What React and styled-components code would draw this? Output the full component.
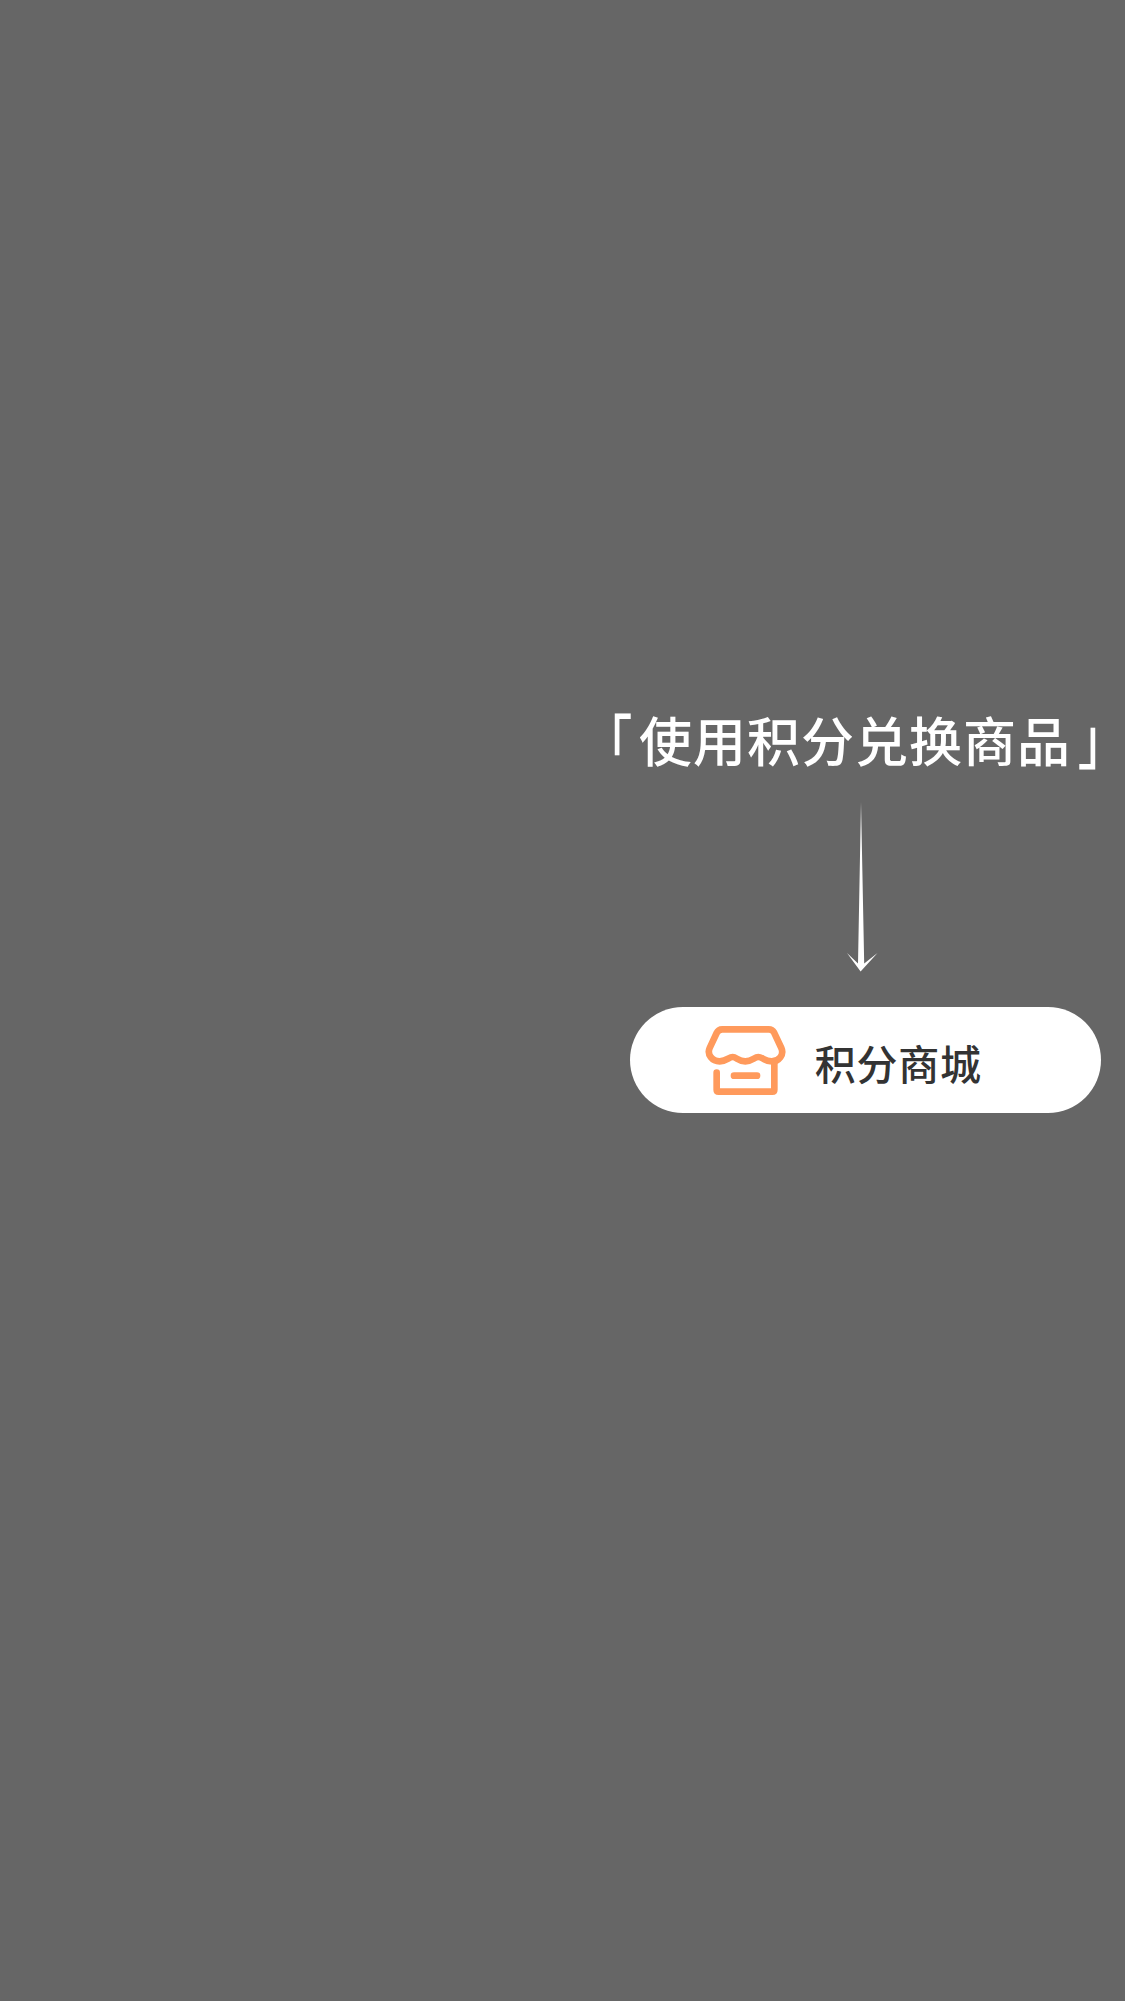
import React from "react";
import styled, { createGlobalStyle } from "styled-components";

const GlobalStyle = createGlobalStyle`
  body {
    margin: 0;
    background: #666666;
    font-family: "Noto Sans CJK SC", "Noto Sans", sans-serif;
  }
`;

const Overlay = styled.main`
  box-sizing: border-box;
  display: flex;
  flex-direction: column;
  align-items: flex-end;
  width: 1125px;
  height: 2001px;
  padding-top: 699px;
  overflow: hidden;
  background: #666666;
`;

const Hint = styled.p`
  display: flex;
  margin: 0;
  color: #ffffff;
  font-size: 53px;
  font-weight: 500;
  letter-spacing: 1px;
  line-height: 80px;
  white-space: nowrap;
`;

const Bracket = styled.span`
  display: block;
  width: 49px;
  margin-${({ $side }) => $side}: 5px;
  text-align: ${({ $side }) => ($side === "left" ? "right" : "left")};
  font-feature-settings: "halt";
  transform: translate(${({ $x }) => $x}px, ${({ $y }) => $y}px) scale(0.93, 1.19);
`;

const Arrow = styled.svg`
  display: block;
  width: 32px;
  height: 170px;
  margin: 23px 247px 0 0;
`;

const MallButton = styled.button`
  box-sizing: border-box;
  display: flex;
  align-items: center;
  width: 471px;
  height: 106px;
  margin: 35px 24px 0 0;
  padding: 0 0 0 75px;
  border: 0;
  border-radius: 54px;
  background: #ffffff;
  color: #333333;
  font-family: inherit;
`;

const ShopIcon = styled.svg`
  display: block;
  flex: none;
  width: 82px;
  height: 72px;
  margin-top: -1px;
`;

const Label = styled.span`
  margin: 3px 0 0 27.8px;
  font-size: 41px;
  font-weight: 500;
  letter-spacing: 0.7px;
  line-height: 60px;
  white-space: nowrap;
`;

export default function App() {
  return (
    <>
      <GlobalStyle />
      <Overlay>
        <Hint>
          <Bracket $side="left" $x={-4} $y={1.5}>「</Bracket>
          <span>使用积分兑换商品</span>
          <Bracket $side="right" $x={5} $y={-3}>」</Bracket>
        </Hint>
        <Arrow viewBox="0 0 32 170" fill="#ffffff" aria-hidden="true">
          <path d="M15 0 L18.2 161.5 L31.5 151 L14.6 169.5 L1 151 L12 161.5 Z" />
        </Arrow>
        <MallButton type="button">
          <ShopIcon
            viewBox="45 42 246 216"
            fill="none"
            stroke="#ff9a5c"
            strokeWidth="20"
            strokeLinecap="round"
            strokeLinejoin="round"
            aria-hidden="true"
          >
            <path d="M97 58 H236 Q247 58 252 67 L274 114 C283 134 267 154 245 154 C223 154 218 141 205 141 C192 141 188 154 166 154 C144 154 140 141 128 141 C116 141 111 154 89 154 C67 154 50 134 59 114 L80 69 Q85 58 97 58 Z" />
            <path d="M80 188 V239 Q80 245 86 245 H247 Q253 245 253 239 V157" />
            <path d="M132 197 H201" />
          </ShopIcon>
          <Label>积分商城</Label>
        </MallButton>
      </Overlay>
    </>
  );
}
